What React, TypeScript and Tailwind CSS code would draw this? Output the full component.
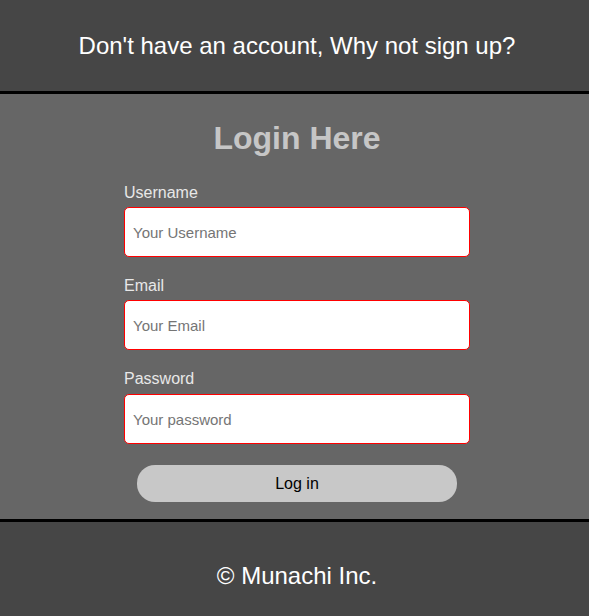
export default function App() {
  return (
    <div className="min-h-[616px] bg-[#464646] text-white" style={{ fontFamily: '"Liberation Sans", Arial, sans-serif' }}>
      <header className="h-[91px] pl-[5px] bg-[#464646] border-b-[3px] border-black box-content flex items-center justify-center">
        <p className="text-[24px] leading-[28px] text-white">Don't have an account, Why not sign up?</p>
      </header>
      <main className="bg-[#666666] pl-[5px] border-b-[3px] border-black pt-[26px] pb-[17px] flex flex-col items-center">
        <h1 className="text-[32px] leading-[37px] font-bold text-[#c6c6c6]">Login Here</h1>
        <form className="w-[346px] mt-[27px] flex flex-col" onSubmit={(e) => e.preventDefault()}>
          <label className="text-[16px] leading-[18px] text-[#e8e8e8] mb-[5px]">Username</label>
          <input className="h-[50px] w-full bg-white border border-[#ff0000] rounded-[5px] px-[8px] text-[15px] text-black placeholder:text-[#757575] outline-none" placeholder="Your Username" />
          <label className="text-[16px] leading-[18px] text-[#e8e8e8] mt-[20px] mb-[5px]">Email</label>
          <input className="h-[50px] w-full bg-white border border-[#ff0000] rounded-[5px] px-[8px] text-[15px] text-black placeholder:text-[#757575] outline-none" placeholder="Your Email" />
          <label className="text-[16px] leading-[18px] text-[#e8e8e8] mt-[20px] mb-[6px]">Password</label>
          <input type="password" className="h-[50px] w-full bg-white border border-[#ff0000] rounded-[5px] px-[8px] text-[15px] text-black placeholder:text-[#757575] outline-none" placeholder="Your password" />
          <button type="submit" className="mt-[21px] mx-auto w-[320px] h-[37px] rounded-[18px] bg-[#c8c8c8] text-black text-[16px]">Log in</button>
        </form>
      </main>
      <footer className="bg-[#464646] pl-[5px] pt-[40px] pb-[40px] flex justify-center">
        <p className="text-[24px] leading-[28px] text-white">© Munachi Inc.</p>
      </footer>
    </div>
  );
}
